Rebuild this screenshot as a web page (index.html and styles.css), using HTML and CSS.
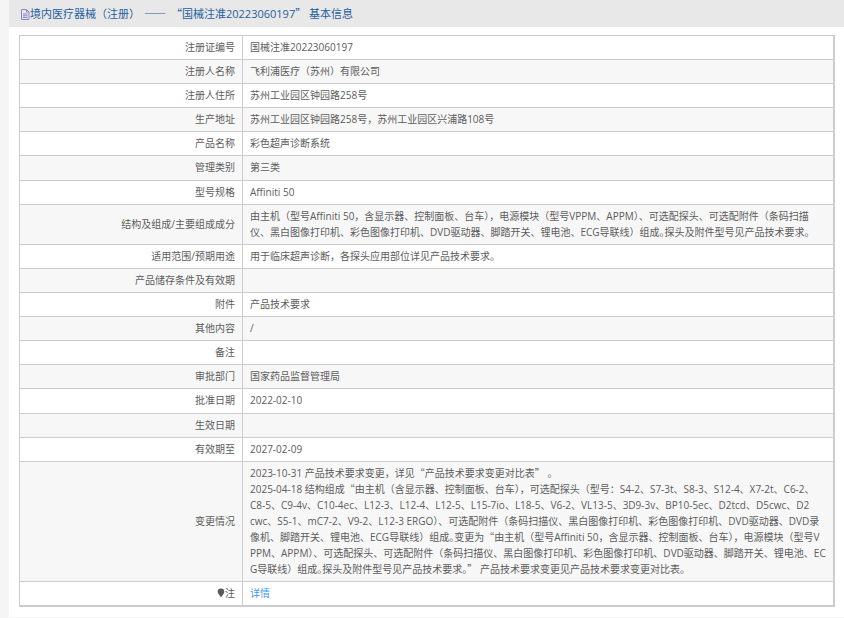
FILE: index.html
```html
<!DOCTYPE html>
<html lang="zh-CN">
<head>
<meta charset="utf-8">
<title>基本信息</title>
<link rel="stylesheet" href="styles.css">
</head>
<body>
<main class="panel">
  <h1 class="title"><svg class="doc" viewBox="0 0 10 11" width="10" height="11"><path d="M1.5.5h5l2.500 2.500v7.500h-7.500z M6.500.5v2.500h2.500 M3 5h4.500 M3 6.800h4.500 M3 8.600h4.500" fill="none" stroke="#8a84c8" stroke-width="1"/></svg>境内医疗器械（注册）<span class="cjk dash">——</span><span class="cjk">“</span>国械注准20223060197<span class="cjk">”</span> 基本信息</h1>
  <table class="info">
    <colgroup><col class="c1"><col></colgroup>
    <tr><th>注册证编号</th><td>国械注准20223060197</td></tr>
    <tr class="alt"><th>注册人名称</th><td>飞利浦医疗（苏州）有限公司</td></tr>
    <tr><th>注册人住所</th><td>苏州工业园区钟园路258号</td></tr>
    <tr class="alt"><th>生产地址</th><td>苏州工业园区钟园路258号，苏州工业园区兴浦路108号</td></tr>
    <tr><th>产品名称</th><td>彩色超声诊断系统</td></tr>
    <tr class="alt"><th>管理类别</th><td>第三类</td></tr>
    <tr><th>型号规格</th><td>Affiniti 50</td></tr>
    <tr class="alt"><th>结构及组成/主要组成成分</th><td>由主机（型号Affiniti 50，含显示器、控制面板、台车），电源模块（型号VPPM、APPM）、可选配探头、可选配附件（条码扫描<br>仪、黑白图像打印机、彩色图像打印机、DVD驱动器、脚踏开关、锂电池、ECG导联线）组成<span class="stop">。</span>探头及附件型号见产品技术要求。</td></tr>
    <tr><th>适用范围/预期用途</th><td>用于临床超声诊断，各探头应用部位详见产品技术要求。</td></tr>
    <tr class="alt"><th>产品储存条件及有效期</th><td></td></tr>
    <tr><th>附件</th><td>产品技术要求</td></tr>
    <tr class="alt"><th>其他内容</th><td>/</td></tr>
    <tr><th>备注</th><td></td></tr>
    <tr class="alt"><th>审批部门</th><td>国家药品监督管理局</td></tr>
    <tr><th>批准日期</th><td>2022-02-10</td></tr>
    <tr class="alt"><th>生效日期</th><td></td></tr>
    <tr><th>有效期至</th><td>2027-02-09</td></tr>
    <tr class="alt"><th>变更情况</th><td>2023-10-31 产品技术要求变更，详见<span class="cjk">“</span>产品技术要求变更对比表<span class="cjk">”</span> 。<br>2025-04-18 结构组成<span class="cjk">“</span>由主机（含显示器、控制面板、台车），可选配探头（型号：S4-2、S7-3t、S8-3、S12-4、X7-2t、C6-2、<br>C8-5、C9-4v、C10-4ec、L12-3、L12-4、L12-5、L15-7io、L18-5、V6-2、VL13-5、3D9-3v、BP10-5ec、D2tcd、D5cwc、D2<br>cwc、S5-1、mC7-2、V9-2、L12-3 ERGO）、可选配附件（条码扫描仪、黑白图像打印机、彩色图像打印机、DVD驱动器、DVD录<br>像机、脚踏开关、锂电池、ECG导联线）组成<span class="stop">。</span>变更为<span class="cjk">“</span>由主机（型号Affiniti 50，含显示器、控制面板、台车），电源模块（型号V<br>PPM、APPM）、可选配探头、可选配附件（条码扫描仪、黑白图像打印机、彩色图像打印机、DVD驱动器、脚踏开关、锂电池、EC<br>G导联线）组成<span class="stop">。</span>探头及附件型号见产品技术要求<span class="stop">。</span><span class="cjk">”</span> 产品技术要求变更见产品技术要求变更对比表。</td></tr>
    <tr><th><svg class="pin" viewBox="0 0 8 10" width="8" height="10"><path d="M4 .5a3.300 3.300 0 0 1 3.300 3.300c0 2-2.200 3.500-3.300 5.700C2.900 7.300.7 5.800.7 3.800A3.300 3.300 0 0 1 4 .5z" fill="#5a5a5a"/></svg>注</th><td><a class="more" href="#">详情</a></td></tr>
  </table>
</main>
</body>
</html>
```
FILE: styles.css
```css
html, body { margin: 0; padding: 0; }
body {
  background: #f5f5f5;
  font-family: "Open Sans", "Noto Sans CJK SC", sans-serif;
  font-size: 10px;
  color: #5c5c5c;
}
.panel {
  margin-left: 9px;
  height: 617px;
  background: #fff;
  box-sizing: border-box;
  padding-bottom: 1px;
}
.title {
  margin: 0 0 8px;
  height: 27px;
  line-height: 26px;
  padding-left: 11px;
  background: #e8e8e8;
  font-size: 11px;
  font-weight: 400;
  color: #1f5f9e;
  white-space: nowrap;
}
.doc { vertical-align: -2px; }
.cjk { font-family: "Noto Sans CJK SC", sans-serif; }
.dash { margin: 0 4px; letter-spacing: 1px; }
.stop { font-feature-settings: "halt"; }
.info {
  width: 816px;
  margin-left: 10px;
  border-collapse: collapse;
  table-layout: fixed;
  border-right: 2px solid #ccc;
  border-bottom: 2px solid #ccc;
  line-height: 16.1px;
}
.c1 { width: 223px; }
.info th, .info td {
  border: 1px solid #ccc;
  padding: 3px 7px 4px;
  font-weight: 400;
  white-space: nowrap;
}
.info th { text-align: right; }
.info td { text-align: left; }
.alt { background: #f7f7f7; }
.pin { vertical-align: -1px; }
.more { color: #3f97f5; text-decoration: none; }
```
